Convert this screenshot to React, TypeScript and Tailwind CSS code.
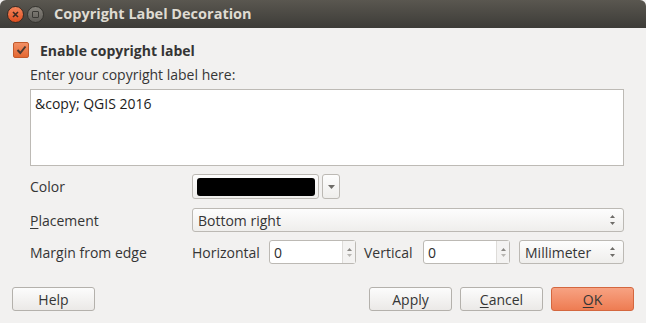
import React from "react";

const font = { fontFamily: '"Open Sans", "DejaVu Sans", sans-serif' };

function SpinArrows() {
  return (
    <svg width="7" height="12" viewBox="0 0 7 12" className="shrink-0">
      <path d="M3.5 1 L6 4 L1 4 Z" fill="#6e6c68" />
      <path d="M3.5 11 L6 8 L1 8 Z" fill="#6e6c68" />
    </svg>
  );
}

function Combo({ text, className }: { text: string; className?: string }) {
  return (
    <div
      className={`flex h-[24px] items-center justify-between rounded-[3px] border border-[#bcb9b4] bg-gradient-to-b from-[#fdfdfd] to-[#efeeec] pl-[5px] pr-[7px] text-[14px] text-[#353535] ${className ?? ""}`}
    >
      <span>{text}</span>
      <SpinArrows />
    </div>
  );
}

function SpinBox({ value }: { value: string }) {
  return (
    <div className="flex h-[24px] w-[87px] rounded-[3px] border border-[#bcb9b4] bg-white">
      <div className="flex flex-1 items-center pl-[4px] text-[14px] text-[#2c2c2c]">{value}</div>
      <div className="flex w-[13px] flex-col items-center justify-center gap-[3px] border-l border-[#dedcd9] bg-[#f4f3f2]">
        <svg width="5" height="3" viewBox="0 0 5 3">
          <path d="M2.5 0 L5 3 L0 3 Z" fill="#8a8884" />
        </svg>
        <svg width="5" height="3" viewBox="0 0 5 3">
          <path d="M2.5 3 L5 0 L0 0 Z" fill="#b8b6b2" />
        </svg>
      </div>
    </div>
  );
}

function Button({ children, ok }: { children: React.ReactNode; ok?: boolean }) {
  return (
    <div
      className={`flex h-[24px] w-[83px] items-center justify-center rounded-[3px] border text-[14px] text-[#353535] ${
        ok
          ? "border-[#d4673f] bg-gradient-to-b from-[#f7a282] to-[#ee7c52]"
          : "border-[#b4b1ac] bg-gradient-to-b from-[#fcfcfc] to-[#ebe9e7]"
      }`}
    >
      {children}
    </div>
  );
}

export default function App() {
  return (
    <div className="h-[323px] w-[646px] overflow-hidden bg-[#f2f1f0]" style={font}>
      {/* title bar */}
      <div className="flex h-[28px] items-center rounded-t-[6px] bg-gradient-to-b from-[#5a5750] to-[#3d3c38] pl-[7px]">
        <div className="flex h-[17px] w-[17px] items-center justify-center rounded-full border border-[#3a2a22] bg-gradient-to-b from-[#f5855a] to-[#dc4d1c]">
          <svg width="7" height="7" viewBox="0 0 7 7">
            <path d="M1 1 L6 6 M6 1 L1 6" stroke="#3a2a22" strokeWidth="1.6" />
          </svg>
        </div>
        <div className="ml-[3px] flex h-[17px] w-[17px] items-center justify-center rounded-full border border-[#35342f] bg-gradient-to-b from-[#86837c] to-[#5f5d58]">
          <div className="h-[7px] w-[7px] rounded-[1px] border-[1.5px] border-[#3a3935]" />
        </div>
        <div className="ml-[10px] text-[14.5px] font-bold text-[#dfdbd2]">Copyright Label Decoration</div>
      </div>

      <div className="px-[12px]">
        {/* checkbox */}
        <div className="mt-[13px] flex h-[18px] items-center">
          <div className="ml-[1px] flex h-[16px] w-[16px] items-center justify-center rounded-[2px] border border-[#c25a2c] bg-gradient-to-b from-[#f29065] to-[#e4672f]">
            <svg width="11" height="10" viewBox="0 0 11 10">
              <path d="M1.5 5 L4.3 8 L9.5 1.5" stroke="#4a3a32" strokeWidth="2" fill="none" />
            </svg>
          </div>
          <span className="ml-[11px] text-[14px] font-bold text-[#353535]">Enable copyright label</span>
        </div>

        <div className="ml-[18px] mr-[10px]">
          <div className="mt-[7px] text-[14px] leading-[18px] text-[#353535]">Enter your copyright label here:</div>
          <div className="mt-[5px] h-[77px] border border-[#bdbab5] bg-white px-[4px] pt-[3px] text-[14px] text-[#1c1c1c]">
            &amp;copy; QGIS 2016
          </div>

          {/* color */}
          <div className="mt-[8px] flex h-[25px] items-center">
            <div className="w-[162px] text-[14px] text-[#353535]">Color</div>
            <div className="flex h-[25px] w-[127px] items-center justify-center rounded-[3px] border border-[#bcb9b4] bg-gradient-to-b from-[#fdfdfd] to-[#efeeec]">
              <div className="h-[18px] w-[118px] rounded-[3px] bg-black" />
            </div>
            <div className="ml-[3px] flex h-[25px] w-[18px] items-center justify-center rounded-[3px] border border-[#bcb9b4] bg-gradient-to-b from-[#fdfdfd] to-[#efeeec]">
              <svg width="7" height="4" viewBox="0 0 7 4">
                <path d="M0 0 L7 0 L3.5 4 Z" fill="#6e6c68" />
              </svg>
            </div>
          </div>

          {/* placement */}
          <div className="mt-[9px] flex h-[24px] items-center">
            <div className="w-[162px] text-[14px] text-[#353535]">
              <span className="underline underline-offset-2">P</span>lacement
            </div>
            <Combo text="Bottom right" className="flex-1" />
          </div>

          {/* margin */}
          <div className="mt-[8px] flex h-[24px] items-center text-[14px] text-[#353535]">
            <div className="w-[162px]">Margin from edge</div>
            <span className="w-[77px]">Horizontal</span>
            <SpinBox value="0" />
            <span className="ml-[8px] w-[59px]">Vertical</span>
            <SpinBox value="0" />
            <Combo text="Millimeter" className="ml-[9px] flex-1" />
          </div>
        </div>

        {/* buttons */}
        <div className="mt-[23px] flex items-center">
          <Button>Help</Button>
          <div className="flex-1" />
          <Button>Apply</Button>
          <div className="w-[8px]" />
          <Button>
            <span className="underline underline-offset-2">C</span>ancel
          </Button>
          <div className="w-[8px]" />
          <Button ok>
            <span className="underline underline-offset-2">O</span>K
          </Button>
        </div>
      </div>
    </div>
  );
}
